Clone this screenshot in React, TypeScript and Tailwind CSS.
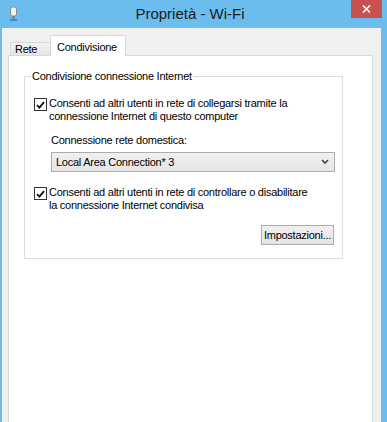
import React from "react";

function CheckBox() {
  return (
    <span className="mt-[1px] flex h-[13px] w-[13px] shrink-0 items-center justify-center border border-[#333] bg-white">
      <svg width="9" height="8" viewBox="0 0 9 8">
        <path d="M1 4.2 L3.4 6.6 L8 1.2" fill="none" stroke="#111" strokeWidth="1.8" />
      </svg>
    </span>
  );
}

function CheckRow({ lines }: { lines: string[] }) {
  return (
    <div className="flex items-start gap-[2px] pl-[9px]">
      <CheckBox />
      <div>
        {lines.map((l) => (
          <div key={l} className="leading-[13px]">
            {l}
          </div>
        ))}
      </div>
    </div>
  );
}

export default function App() {
  return (
    <div
      className="flex h-[422px] w-[387px] flex-col overflow-hidden bg-[#6bbdee] text-[11px] tracking-[-0.25px] text-black"
      style={{ fontFamily: '"Liberation Sans", Arial, sans-serif' }}
    >
      {/* title bar */}
      <div className="relative flex h-[28px] shrink-0 items-center">
        <svg className="ml-[9px]" width="9" height="16" viewBox="0 0 9 16">
          <rect x="1.5" y="1" width="6" height="9" rx="2" fill="#f2f2f2" stroke="#8a8a8a" />
          <rect x="3.5" y="10" width="2" height="3" fill="#7a7a7a" />
          <rect x="1" y="13" width="7" height="2" fill="#2f8fd8" />
        </svg>
        <div className="flex-1 pr-[25px] text-center text-[15px] tracking-normal text-[#1b1b1b]">
          Proprietà - Wi-Fi
        </div>
        <div className="absolute right-[5px] top-0 flex h-[18px] w-[31px] items-center justify-center bg-[#c75050]">
          <svg width="9" height="8" viewBox="0 0 9 8">
            <path d="M1 0.5 L8 7.5 M8 0.5 L1 7.5" stroke="#fff" strokeWidth="1.6" />
          </svg>
        </div>
      </div>

      {/* client area */}
      <div className="ml-[2px] mr-[6px] flex flex-1 flex-col bg-[#f0f0f0]">
        <div className="mt-[7px] flex h-[20px] items-end pl-[8px]">
          <div className="flex h-[13px] w-[41px] items-center border border-b-0 border-[#d9d9d9] bg-gradient-to-b from-[#f2f2f2] to-[#e6e6e6] pl-[4px] pt-[1px]">
            Rete
          </div>
          <div className="relative z-10 -mb-px ml-[-1px] flex h-[21px] w-[76px] items-start border border-b-0 border-[#d9d9d9] bg-white pl-[6px] pt-[3px]">
            Condivisione
          </div>
        </div>

        <div className="ml-[6px] w-[365px] flex-1 border border-b-0 border-[#d9d9d9] bg-white">
          <div className="relative ml-[15px] mt-[20px] flex h-[183px] w-[319px] flex-col border border-[#dcdcdc] pb-[12px] pt-[20px]">
            <div className="absolute left-[6px] top-[-7px] bg-white px-[1px] leading-[13px]">
              Condivisione connessione Internet
            </div>
            <CheckRow
              lines={[
                "Consenti ad altri utenti in rete di collegarsi tramite la",
                "connessione Internet di questo computer",
              ]}
            />
            <div className="ml-[26px] mt-[11px] leading-[13px]">Connessione rete domestica:</div>
            <div className="ml-[26px] mt-[5px] flex h-[20px] w-[284px] items-center justify-between border border-[#acacac] bg-gradient-to-b from-[#f0f0f0] to-[#e5e5e5] pl-[4px] pr-[5px]">
              <span>Local Area Connection* 3</span>
              <svg width="8" height="6" viewBox="0 0 8 6">
                <path d="M1 1 L4 4 L7 1" fill="none" stroke="#444" strokeWidth="1.6" />
              </svg>
            </div>
            <div className="mt-[14px]">
              <CheckRow
                lines={[
                  "Consenti ad altri utenti in rete di controllare o disabilitare",
                  "la connessione Internet condivisa",
                ]}
              />
            </div>
            <div className="mr-[8px] mt-[13px] flex h-[20px] w-[73px] items-center justify-center self-end border border-[#acacac] bg-gradient-to-b from-[#f0f0f0] to-[#e5e5e5]">
              Impostazioni...
            </div>
          </div>
        </div>
      </div>
    </div>
  );
}
